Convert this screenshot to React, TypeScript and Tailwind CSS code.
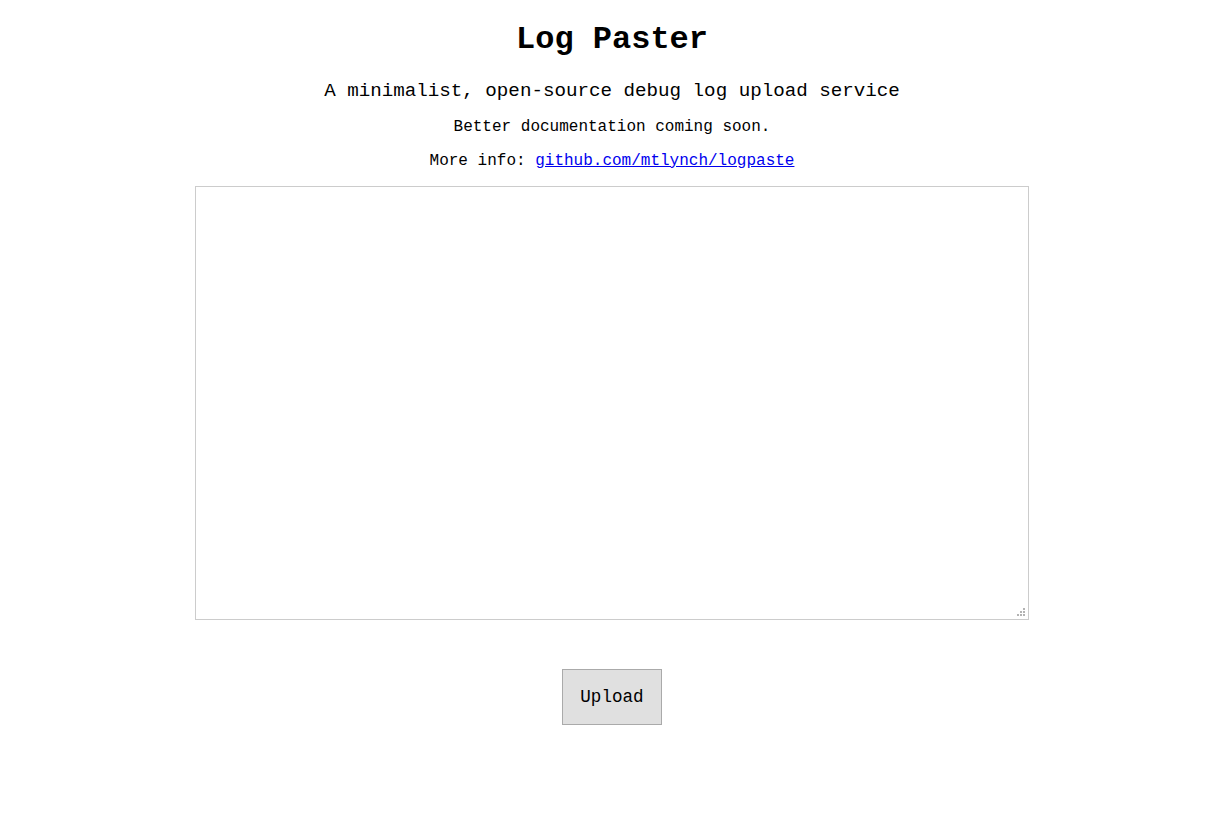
const mono = "font-['Liberation_Mono','Courier_New',monospace]";

function Grip() {
  const dots = [
    [6, 0],
    [3, 3],
    [6, 3],
    [0, 6],
    [3, 6],
    [6, 6],
  ];
  return (
    <svg
      width="8"
      height="8"
      viewBox="0 0 8 8"
      className="pointer-events-none absolute right-[4px] bottom-[4px]"
    >
      {dots.map(([x, y], i) => (
        <rect key={i} x={x} y={y} width="2" height="2" fill="#b3b3b3" />
      ))}
    </svg>
  );
}

export default function App() {
  return (
    <div className={`min-h-screen bg-white text-black ${mono}`}>
      <div className="flex flex-col items-center text-center">
        <h1 className="mt-[22px] text-[32px] leading-[36px] font-bold">
          Log Paster
        </h1>
        <p className="mt-[22px] text-[19.2px] leading-[22px]">
          A minimalist, open-source debug log upload service
        </p>
        <p className="mt-[16px] text-[16px] leading-[18px]">
          Better documentation coming soon.
        </p>
        <p className="mt-[16px] text-[16px] leading-[18px]">
          More info:{" "}
          <a href="#" className="text-[#0000ee] underline">
            github.com/mtlynch/logpaste
          </a>
        </p>
        <div className="relative mt-[16px]">
          <textarea
            className="block w-[834px] h-[434px] border border-[#cccccc] bg-white outline-none resize-none"
            aria-label="log"
          />
          <Grip />
        </div>
        <button className="mt-[49px] w-[100px] h-[56px] bg-[#e0e0e0] border border-[#aaaaaa] text-[17.6px]">
          Upload
        </button>
      </div>
    </div>
  );
}
